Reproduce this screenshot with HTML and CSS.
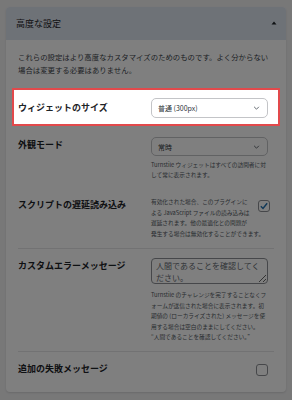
FILE: index.html
```html
<!DOCTYPE html>
<html lang="ja">
<head>
  <meta charset="UTF-8">
  <meta name="viewport" content="width=device-width, initial-scale=1.0">
  <title>高度な設定</title>
  <link rel="stylesheet" href="styles.css">
</head>
<body>
  <div class="panel">
    <div class="panel-head">
      <h2>高度な設定</h2>
      <svg class="caret" viewBox="0 0 6 4" width="6" height="4"><path d="M3 0.5L5.5 3.5H0.5Z" fill="#1d2327"/></svg>
    </div>
    <div class="panel-body">
      <p class="intro">これらの設定はより高度なカスタマイズのためのものです。よく分からない場合は変更する必要はありません。</p>

      <div class="field is-highlight">
        <label class="field-label">ウィジェットのサイズ</label>
        <div class="field-control">
          <div class="select">
            <span>普通 (300px)</span>
            <svg viewBox="0 0 8 5" width="7" height="4"><path d="M1 1l3 3 3-3" fill="none" stroke="#50575e" stroke-width="1.1"/></svg>
          </div>
        </div>
      </div>

      <div class="field field-mode">
        <label class="field-label">外観モード</label>
        <div class="field-control">
          <div class="select select-sm">
            <span>常時</span>
            <svg viewBox="0 0 8 5" width="7" height="4"><path d="M1 1l3 3 3-3" fill="none" stroke="#50575e" stroke-width="1.1"/></svg>
          </div>
          <p class="help">Turnstile ウィジェットはすべての訪問者に対<br>して常に表示されます。</p>
        </div>
      </div>

      <div class="field field-defer">
        <label class="field-label">スクリプトの遅延読み込み</label>
        <div class="field-control">
          <span class="check is-checked">
            <svg viewBox="0 0 12 12" width="10" height="10"><path d="M2.2 6.3l2.6 2.6L9.8 2.8" fill="none" stroke="#2271b1" stroke-width="1.8"/></svg>
          </span>
          <p class="help help-wide">有効化された場合、このプラグインに<br>よる JavaScript ファイルの読み込みは<br>遅延されます。他の最適化との問題が<br>発生する場合は無効化することができます。</p>
        </div>
      </div>

      <hr class="rule">

      <div class="field field-error">
        <label class="field-label">カスタムエラーメッセージ</label>
        <div class="field-control">
          <textarea class="textarea" placeholder="人間であることを確認してください。"></textarea>
          <p class="help help-wide">Turnstile のチャレンジを完了することなくフ<br>ォームが送信された場合に表示されます。初<br>期値の (ローカライズされた) メッセージを使<br>用する場合は空白のままにしてください。<br>“人間であることを確認してください。”</p>
        </div>
      </div>

      <hr class="rule">

      <div class="field field-extra">
        <label class="field-label">追加の失敗メッセージ</label>
        <div class="field-control field-control-end">
          <span class="check"></span>
        </div>
      </div>
    </div>
  </div>
</body>
</html>
```

FILE: styles.css
```css
* {
  margin: 0;
  padding: 0;
  box-sizing: border-box;
}

html, body {
  height: 100%;
  overflow: hidden;
}

body {
  background: #f0f0f1;
  font-family: "Noto Sans CJK JP", "Noto Sans", sans-serif;
  color: #1d2327;
  padding: 7px 6px 0;
}

.panel {
  width: 280px;
  background: #fff;
  border-radius: 4px;
  box-shadow: 0 1px 2px rgba(0, 0, 0, 0.12);
}

.panel-head {
  height: 33px;
  display: flex;
  align-items: center;
  justify-content: space-between;
  padding: 0 9px 0 10px;
  background: #dde4ee;
  border-radius: 4px 4px 0 0;
}

.panel-head h2 {
  font-size: 9px;
  font-weight: 400;
  line-height: 1;
}

.caret {
  margin-bottom: 2px;
}

.panel-body {
  padding-top: 10px;
}

.intro {
  margin: 0 12px 12px;
  font-size: 7.4px;
  line-height: 13px;
  color: #3c434a;
}

.field {
  margin: 0 6px;
  border: 2px solid transparent;
  padding: 0 6px 0 4px;
  display: grid;
  grid-template-columns: 133px 117px;
  align-items: start;
}

.field.is-highlight {
  position: relative;
  z-index: 1;
  border-color: #e2494b;
  padding: 8px 6px 6px 4px;
  align-items: center;
  background: #fff;
  box-shadow: 0 0 0 800px rgba(0, 0, 0, 0.5);
}

.field-label {
  font-size: 9px;
  font-weight: 700;
  line-height: 16px;
  color: #1d2327;
}

.select {
  height: 20px;
  display: flex;
  align-items: center;
  justify-content: space-between;
  padding: 0 7px 0 6px;
  border: 1px solid #c3c4c7;
  border-radius: 5px;
  background: #fff;
  font-size: 7px;
  color: #2c3338;
}

.select-sm {
  height: 19px;
}

.help {
  font-size: 5.7px;
  line-height: 9.5px;
  color: #50575e;
  margin-top: 4px;
  white-space: nowrap;
}

.help-wide {
  line-height: 10.5px;
}

.field-mode {
  padding-top: 9px;
  padding-bottom: 2px;
}

.field-defer {
  padding-top: 12px;
  padding-bottom: 6.5px;
}

.field-defer .help {
  margin-top: 0;
}

.check {
  display: flex;
  align-items: center;
  justify-content: center;
  width: 12px;
  height: 12px;
  border: 1px solid #8c8f94;
  border-radius: 3px;
  background: #fff;
}

.field-defer .check {
  float: right;
  margin: 2.5px -2px 0 6px;
}

.rule {
  border: none;
  height: 1px;
  background: #e4e4e7;
  margin: 0 12px;
}

.field-error {
  padding-top: 7.5px;
  padding-bottom: 6.5px;
}

.textarea {
  display: block;
  width: 117px;
  height: 26px;
  padding: 1px 4px;
  border: 1px solid #8c8f94;
  border-radius: 4px;
  font-family: inherit;
  font-size: 8px;
  line-height: 12px;
  resize: vertical;
  overflow: hidden;
}

.textarea::placeholder {
  color: #646970;
}

.field-error .help {
  margin-top: 6px;
}

.field-extra {
  padding-top: 7px;
  padding-bottom: 13px;
}

.field-control-end {
  display: flex;
  justify-content: flex-end;
  padding-top: 3px;
}
```
